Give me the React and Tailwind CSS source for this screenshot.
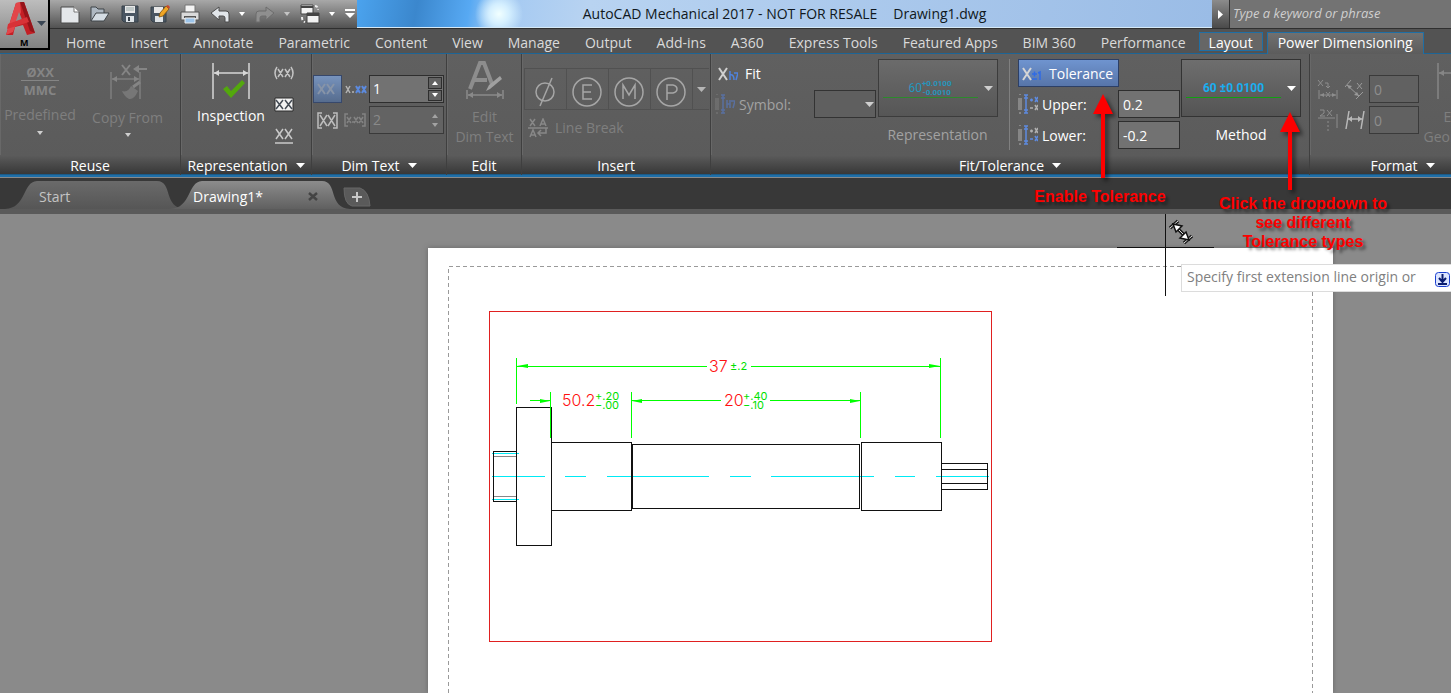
import React, { useState } from 'react';

const MENU = [
  'Home', 'Insert', 'Annotate', 'Parametric', 'Content', 'View', 'Manage', 'Output',
  'Add-ins', 'A360', 'Express Tools', 'Featured Apps', 'BIM 360', 'Performance',
];

const FIELD = 'h-7 border border-[#2e2e2e] bg-[#727272] px-1 text-sm text-white outline-none';
const FIELD_OFF = 'h-7 border border-[#3a3a3a] bg-[#616161] px-1 text-sm text-[#8e8e8e] outline-none';

function Triangle({ className = 'fill-white' }) {
  return (
    <svg className={`h-[5px] w-[9px] shrink-0 ${className}`} viewBox="0 0 9 5">
      <path d="M0 0h9L4.500 5z" />
    </svg>
  );
}

function SmallTriangle({ className = 'fill-white', up = false }) {
  return (
    <svg className={`h-[4px] w-[6px] shrink-0 ${className}`} viewBox="0 0 6 4">
      <path d={up ? 'M0 4h6L3 0z' : 'M0 0h6L3 4z'} />
    </svg>
  );
}

function QuickAccess() {
  return (
    <div className="flex h-full w-[307px] shrink-0 items-center gap-[10px] bg-linear-to-b from-[#a8a8a8] via-[#7d7d7d] to-[#525252] pl-[10px]">
      <button aria-label="New">
        <svg className="h-5 w-5" viewBox="0 0 20 20">
          <path d="M1 3h13l5 5v11H1z" fill="#e4e7ea" stroke="#4b4b4b" />
          <path d="M14 3v5h5" fill="#fff" stroke="#777" />
        </svg>
      </button>
      <button aria-label="Open">
        <svg className="h-5 w-5" viewBox="0 0 20 20">
          <path d="M1 17V3h5l2 2h6v4" fill="#aeb8c2" stroke="#3f4448" />
          <path d="M1 17 6 9h13l-5 8z" fill="#d4dce3" stroke="#3f4448" />
        </svg>
      </button>
      <button aria-label="Save">
        <svg className="h-5 w-5" viewBox="0 0 20 20">
          <path d="M2 2h16v16H4l-2-2z" fill="#4a5663" stroke="#39424b" />
          <path d="M5 2h10v7H5z" fill="#e8e8e8" />
          <path d="M6 4h8M6 6h8" stroke="#9aa" />
          <path d="M6 12h8v6H6z" fill="#dfe4e8" />
          <path d="M8 13h2v4H8z" fill="#39424b" />
        </svg>
      </button>
      <button aria-label="Save As">
        <svg className="h-5 w-5" viewBox="0 0 20 20">
          <path d="M1 3h15v15H3l-2-2z" fill="#4a5663" stroke="#39424b" />
          <path d="M4 3h9v6H4z" fill="#e8e8e8" />
          <path d="M5 12h8v6H5z" fill="#dfe4e8" />
          <path d="m9 13 1-4 6-7 3 3-6 7z" fill="#f0a626" stroke="#7a5211" strokeWidth="0.8" />
          <path d="m16 2 3 3 1-2-2-2z" fill="#c9482b" />
        </svg>
      </button>
      <button aria-label="Plot">
        <svg className="h-5 w-5" viewBox="0 0 20 20">
          <path d="M5 1h10v8H5z" fill="#f4f4f4" stroke="#777" />
          <path d="M1 8h18v8H1z" fill="#dadada" stroke="#555" />
          <path d="M4 12h12v2H4z" fill="#555" />
          <path d="M5 14h10v5H5z" fill="#9cc4ea" stroke="#eee" />
        </svg>
      </button>
      <button aria-label="Undo">
        <svg className="h-5 w-5" viewBox="0 0 20 20">
          <path d="m1 9 8-6v4h7q3 0 3 3v8h-4v-4q0-2-2-2H9v4z" fill="#e2e6ea" stroke="#4c4c4c" />
        </svg>
      </button>
      <button aria-label="Undo list" className="-ml-px"><SmallTriangle /></button>
      <button aria-label="Redo">
        <svg className="h-5 w-5" viewBox="0 0 20 20">
          <path d="m19 9-8-6v4H4q-3 0-3 3v8h4v-4q0-2 2-2h4v4z" fill="#8f8f8f" stroke="#6d6d6d" />
        </svg>
      </button>
      <button aria-label="Redo list" className="-ml-px"><SmallTriangle className="fill-[#c4c4c4]" /></button>
      <button aria-label="Switch windows">
        <svg className="h-5 w-5" viewBox="0 0 20 20">
          <path d="M1 1h12v9H1z" fill="#f2f2f2" stroke="#444" />
          <path d="M1 2h12v2H1z" fill="#444" />
          <path d="M7 9h12v10H7z" fill="#f2f2f2" stroke="#444" />
          <path d="M7 9h12v3H7z" fill="#444" />
          <path d="M15 2q3 0 3 4M2 13q0 4 3 5" fill="none" stroke="#eee" strokeWidth="2" strokeDasharray="3 2" />
        </svg>
      </button>
      <button aria-label="Window list" className="-ml-px"><SmallTriangle /></button>
      <button aria-label="Customize toolbar">
        <svg className="h-[10px] w-[10px]" viewBox="0 0 10 10">
          <path d="M0 0h10v2H0zM0 4h10L5 9z" fill="#fff" />
        </svg>
      </button>
    </div>
  );
}

function Header() {
  return (
    <header className="flex border-b border-[#1d6596] bg-[#535353]">
      <button aria-label="Application menu" className="h-[50px] w-[50px] shrink-0 border-r-2 border-b-2 border-black bg-linear-to-b from-[#bdbdbd] to-[#828282]">
        <svg className="h-12 w-12" viewBox="0 0 48 48">
          <path d="m16 3 8-1 11 31-8 2-4-10-8 2-2 8H6z" fill="#c41f25" />
          <path d="m16 3 4-1 1 10-8 20-7 3z" fill="#e2464a" />
          <path d="m19 12-4 12 8-2z" fill="#8f8f8f" />
          <path d="m20 2 4 0 11 31-5-2z" fill="#95141a" />
          <path d="m8 24 19-7 2 5-22 7z" fill="#d83237" />
          <path d="M37 21h9l-4.500 5z" fill="#3a4654" />
          <text x="20" y="46" fontSize="9" fontWeight="bold" fill="#000">M</text>
        </svg>
      </button>
      <div className="min-w-0 flex-1">
        <div className="flex h-[29px] border-b border-[#2f2f2f]">
          <QuickAccess />
          <div className="flex min-w-0 flex-1 items-center justify-center gap-4 border-b border-[#d5e9f7] bg-[radial-gradient(circle_at_142px_14px,#f1ffff_0px,#d4efff_10px,transparent_24px),linear-gradient(100deg,#4ba3ee_0px,#3b87cd_60px,#57a9f3_112px,#a3c9f2_140px,#b8d3f1_230px,#9abce6_100%)] pt-px text-sm text-[#101820]">
            <h1 className="whitespace-nowrap">AutoCAD Mechanical 2017 - NOT FOR RESALE</h1>
            <span className="whitespace-nowrap">Drawing1.dwg</span>
          </div>
          <button aria-label="Expand search" className="flex w-[17px] shrink-0 items-center justify-center bg-linear-to-b from-[#8c8c8c] to-[#4a4a4a]">
            <svg className="h-[9px] w-[5px] fill-white" viewBox="0 0 5 9"><path d="M0 0v9l5-4.500z" /></svg>
          </button>
          <input
            type="text"
            aria-label="Search"
            placeholder="Type a keyword or phrase"
            className="w-[222px] shrink-0 border-l border-[#333] bg-[#737373] px-[3px] text-[13px] italic outline-none placeholder:text-[#cfcfcf]"
          />
        </div>
        <nav className="flex h-6 items-end gap-px pl-1 text-sm text-[#dadada]">
          {MENU.map((name) => (
            <a key={name} href="#" className="h-[21px] px-3 leading-[22px] whitespace-nowrap">{name}</a>
          ))}
          <a href="#" className="mb-[2px] h-[19px] border border-[#1f6fa5] bg-[#666] px-[9px] leading-[19px] text-white">Layout</a>
          <a href="#" className="z-10 -mb-px ml-[3px] h-[22px] border border-b-0 border-[#1f6fa5] bg-linear-to-b from-[#707070] to-[#5c5c5c] px-[10px] leading-5 whitespace-nowrap text-white">
            Power Dimensioning
          </a>
        </nav>
      </div>
    </header>
  );
}

function Panel({ title, width, menu = false, children }) {
  return (
    <section className={`flex shrink-0 flex-col border-r border-[#3f3f3f] ${width}`}>
      <div className="h-[101px] border-l border-[#686868]">{children}</div>
      <h2 className="flex h-5 items-center justify-center gap-2 border-b border-[#1b5a87] bg-linear-to-b from-[#5c5c5c] to-[#383838] pt-[2px] text-sm leading-4 whitespace-nowrap text-white">
        {title}
        {menu && <Triangle />}
      </h2>
    </section>
  );
}

// two extension lines with a double headed arrow between them
function DimLines({ color }) {
  return (
    <g stroke={color} fill={color}>
      <path d="M2 0v36M38 0v36M3 10h34" strokeWidth="1.500" fill="none" />
      <path d="m3 10 5-3v6zM37 10l-5-3v6z" stroke="none" />
    </g>
  );
}

function ReusePanel() {
  return (
    <Panel title="Reuse" width="w-[181px]">
      <div className="flex pt-[9px] text-sm text-[#7f7f7f]">
        <button className="flex w-[78px] flex-col items-center whitespace-nowrap" disabled>
          <svg className="h-9 w-10" viewBox="0 0 40 36">
            <g fill="#858585" fontSize="13" fontWeight="bold" textAnchor="middle">
              <text x="20" y="14">ØXX</text>
              <text x="20" y="32">MMC</text>
            </g>
            <path d="M1 17.500h38" stroke="#858585" />
          </svg>
          <span className="h-8 pt-[7px] leading-[18px]">Predefined</span>
          <SmallTriangle className="fill-[#cfcfcf]" />
        </button>
        <button className="flex w-[97px] flex-col items-center whitespace-nowrap" disabled>
          <svg className="h-[38px] w-10" viewBox="0 0 40 38">
            <path d="M3 9v27M32 9v27M4 16h27" stroke="#7f7f7f" strokeWidth="1.500" />
            <path d="m4 16 5-3v6zM31 16l-5-3v6z" fill="#858585" />
            <path d="m14 2 8 10M22 2l-8 10" stroke="#858585" strokeWidth="2" />
            <path d="M39 6H30" stroke="#858585" strokeWidth="2" />
            <path d="m25 6 6-4v8z" fill="#858585" />
            <path d="M14 28q6 2 9-5l7 5q-4 9-9 8-5-3-7-8z" fill="#777" />
            <path d="m25 24 7-5" stroke="#858585" strokeWidth="3" />
          </svg>
          <span className="h-8 pt-2 leading-[18px]">Copy From</span>
          <SmallTriangle className="fill-[#cfcfcf]" />
        </button>
      </div>
    </Panel>
  );
}

function RepresentationPanel() {
  return (
    <Panel title="Representation" width="w-[131px]" menu>
      <div className="flex pt-[9px] pl-[10px] text-sm text-white">
        <button className="flex w-[78px] flex-col items-center">
          <svg className="h-9 w-10" viewBox="0 0 40 36">
            <DimLines color="#d6d6d6" />
            <path d="m12 26 4-3 4 5L31 17l3 3-14 15z" fill="#53a80d" />
          </svg>
          <span className="h-8 pt-2 leading-[18px]">Inspection</span>
        </button>
        <div className="flex flex-col gap-3 pl-[2px]">
          <button aria-label="Reference dimension">
            <svg className="h-5 w-6" viewBox="0 0 24 20">
              <path d="M5 4q-4 6 0 12M19 4q4 6 0 12M6 6l5 8M11 6l-5 8M13 6l5 8M18 6l-5 8" fill="none" stroke="#c4c4c4" strokeWidth="1.500" />
            </svg>
          </button>
          <button aria-label="Theoretical dimension">
            <svg className="h-5 w-6" viewBox="0 0 24 20">
              <path d="M3 3h18v13H3z" fill="#f2f2f2" stroke="#2d2d2d" />
              <path d="m4 5 7 9M11 5l-7 9M13 5l7 9M20 5l-7 9" stroke="#444c55" strokeWidth="1.500" />
            </svg>
          </button>
          <button aria-label="Underlined dimension">
            <svg className="h-5 w-6" viewBox="0 0 24 20">
              <path d="m4 2 7 10M11 2 4 12M13 2l7 10M20 2l-7 10M3 16h18" stroke="#c9c9c9" strokeWidth="1.500" />
            </svg>
          </button>
        </div>
      </div>
    </Panel>
  );
}

function DimTextPanel() {
  const [primary, setPrimary] = useState('1');
  return (
    <Panel title="Dim Text" width="w-[135px]" menu>
      <div className="grid grid-cols-[29px_25px_75px] gap-x-px gap-y-[3px] pt-[21px]">
        <button aria-label="Primary units" className="h-7 border border-[#37486b] bg-linear-to-b from-[#7793bd] to-[#566c8e]">
          <svg className="h-5 w-6" viewBox="0 0 24 20">
            <path d="m4 5 7 10M11 5 4 15M13 5l7 10M20 5l-7 10" stroke="#8794a8" strokeWidth="2" />
          </svg>
        </button>
        <svg className="h-7 w-[25px]" viewBox="0 0 25 28">
          <path d="m3 11 4 7M7 11l-4 7M9 17h2" stroke="#b5b5b5" strokeWidth="1.500" />
          <path d="m13 11 4 7M17 11l-4 7M19 11l4 7M23 11l-4 7" stroke="#5c8ade" strokeWidth="2" />
        </svg>
        <div className="flex border border-[#2e2e2e] bg-[#727272]">
          <input
            type="text"
            aria-label="Primary precision"
            value={primary}
            onChange={(e) => setPrimary(e.target.value)}
            className="w-[58px] bg-transparent px-[3px] text-sm text-white outline-none"
          />
          <span className="flex w-[14px] shrink-0 flex-col gap-px py-px">
            <button aria-label="Increase" className="flex flex-1 items-center justify-center border border-[#2e2e2e] bg-[#626262]"><SmallTriangle up /></button>
            <button aria-label="Decrease" className="flex flex-1 items-center justify-center border border-[#2e2e2e] bg-[#626262]"><SmallTriangle /></button>
          </span>
        </div>
        <svg className="h-7 w-[29px]" viewBox="0 0 29 28">
          <path d="M9 7H5v15h4M20 7h4v15h-4M7 9l7 11M14 9 7 20M15 9l7 11M22 9l-7 11" fill="none" stroke="#bdbdbd" strokeWidth="1.500" />
        </svg>
        <svg className="h-7 w-[25px]" viewBox="0 0 25 28">
          <path d="M5 8H2v12h3M19 8h3v12h-3M4 11l4 6M8 11l-4 6M9 16h2M11 11l4 6M15 11l-4 6M16 11l4 6M20 11l-4 6" fill="none" stroke="#838383" strokeWidth="1.500" />
        </svg>
        <div className="flex border border-[#3a3a3a] bg-[#636363]">
          <input type="text" aria-label="Alternate precision" defaultValue="2" disabled className="w-[58px] bg-transparent px-[3px] text-sm text-[#8a8a8a]" />
          <span className="flex w-[14px] shrink-0 flex-col items-center justify-around py-1">
            <SmallTriangle className="fill-[#a3a3a3]" up />
            <SmallTriangle className="fill-[#a3a3a3]" />
          </span>
        </div>
      </div>
    </Panel>
  );
}

function EditPanel() {
  return (
    <Panel title="Edit" width="w-[75px]">
      <button className="flex w-full flex-col items-center pt-[7px] text-sm leading-5 whitespace-nowrap text-[#7f7f7f]" disabled>
        <svg className="h-[39px] w-10" viewBox="0 0 40 39">
          <path d="M5 28 15 2h4l8 21M9 19h13" fill="none" stroke="#8d8d8d" strokeWidth="4" />
          <path d="m21 30 3-6L35 15l2 3-12 10z" fill="#a0a0a0" />
          <path d="M2 29v9M38 29v9M3 34h34" stroke="#8a8a8a" strokeWidth="1.500" />
          <path d="m3 34 5-3v6zM37 34l-5-3v6z" fill="#8a8a8a" />
        </svg>
        <span className="pt-[7px]">Edit</span>
        <span>Dim Text</span>
      </button>
    </Panel>
  );
}

function InsertPanel() {
  return (
    <Panel title="Insert" width="w-[189px]">
      <div className="px-px pt-[14px]">
        <div className="flex h-[42px] border border-r-0 border-[#515151]">
          <button aria-label="Diameter" className="w-[42px] border-r border-[#515151]" disabled>
            <svg className="h-[38px] w-[38px]" viewBox="0 0 38 38">
              <circle cx="20" cy="22" r="9" fill="none" stroke="#a6a6a6" strokeWidth="1.500" />
              <path d="m27 8-12 28" stroke="#a6a6a6" strokeWidth="1.500" />
            </svg>
          </button>
          <button aria-label="Envelope" className="w-[42px] border-r border-[#515151]" disabled>
            <svg className="h-[38px] w-[38px]" viewBox="0 0 38 38">
              <circle cx="20" cy="22" r="14" fill="none" stroke="#a6a6a6" strokeWidth="1.500" />
              <path d="M25 15h-9v14h9M16 22h8" fill="none" stroke="#a6a6a6" strokeWidth="1.500" />
            </svg>
          </button>
          <button aria-label="Maximum material" className="w-[42px] border-r border-[#515151]" disabled>
            <svg className="h-[38px] w-[38px]" viewBox="0 0 38 38">
              <circle cx="20" cy="22" r="14" fill="none" stroke="#a6a6a6" strokeWidth="1.500" />
              <path d="M14 29V15l6 10 6-10v14" fill="none" stroke="#a6a6a6" strokeWidth="1.500" />
            </svg>
          </button>
          <button aria-label="Projected zone" className="w-[42px] border-r border-[#515151]" disabled>
            <svg className="h-[38px] w-[38px]" viewBox="0 0 38 38">
              <circle cx="20" cy="22" r="14" fill="none" stroke="#a6a6a6" strokeWidth="1.500" />
              <path d="M16 30V15h6q4 1 4 4t-4 4h-6" fill="none" stroke="#a6a6a6" strokeWidth="1.500" />
            </svg>
          </button>
          <button aria-label="More symbols" className="flex w-4 items-center justify-center" disabled>
            <Triangle className="fill-[#b5b5b5]" />
          </button>
        </div>
        <button className="flex h-9 items-center gap-[7px] pl-1 text-sm text-[#7f7f7f]" disabled>
          <svg className="h-5 w-5" viewBox="0 0 20 20">
            <path d="m2 1 5 7M7 1 2 8M12 8l3-7 3 7M13 6h4M2 19l3-7 3 7M3 17h4M0 10h20M18 10v5h-7M13 12l-3 3 3 3" fill="none" stroke="#888" strokeWidth="1.500" />
          </svg>
          Line Break
        </button>
      </div>
    </Panel>
  );
}

function DeviationIcon({ upper }) {
  return (
    <svg className="h-5 w-5 shrink-0" viewBox="0 0 20 20">
      <path d="M1 0h2M1 19h2M1 4v12M3 4v12" stroke="#b0b0b0" />
      <path d="M8 1v18M6 1h4M6 19h4M6 4h4M6 16h4" stroke="#5e8be0" strokeWidth="1.500" />
      <path d="M12 6h3M13.500 4.500v3M17 3l3 5M20 3l-3 5" stroke={upper ? '#5e8be0' : '#b0b0b0'} strokeWidth="1.500" />
      <path d="M12 14h3M17 11l3 5M20 11l-3 5" stroke={upper ? '#b0b0b0' : '#5e8be0'} strokeWidth="1.500" />
    </svg>
  );
}

function FitTolerancePanel() {
  const [upper, setUpper] = useState('0.2');
  const [lower, setLower] = useState('-0.2');
  return (
    <Panel title="Fit/Tolerance" width="w-[599px]" menu>
      <div className="flex pt-[5px] text-sm">
        <div className="grid w-[165px] grid-rows-[28px_28px] gap-y-[3px]">
          <button className="flex items-center gap-[7px] pt-px pl-[6px] text-white">
            <svg className="h-5 w-5" viewBox="0 0 20 20">
              <path d="m1 4 8 12M9 4 1 16" stroke="#d0d0d0" strokeWidth="2" />
              <path d="M12 7v9M12 11q4-1 4 5M16 9h4l-2 7" fill="none" stroke="#4f83dd" strokeWidth="1.500" />
            </svg>
            Fit
          </button>
          <div className="flex items-center pl-[3px] text-[#a2a2a2]">
            <svg className="h-5 w-5 shrink-0" viewBox="0 0 20 20">
              <path d="M1 0h2M1 19h2M1 4v12M3 4v12" stroke="#7c7c7c" />
              <path d="M8 1v18M6 1h4M6 19h4M6 4h4M6 16h4M12 6v8M15 6v8M12 10h3M16 7h4l-2 7" stroke="#5970a0" fill="none" strokeWidth="1.500" />
            </svg>
            <label htmlFor="symbol" className="w-[79px] pt-px pl-1">Symbol:</label>
            <div className="relative">
              <select id="symbol" disabled className="h-7 w-[62px] appearance-none border border-[#333] bg-[#5f5f5f]">
                <option></option>
              </select>
              <svg className="pointer-events-none absolute top-3 right-[2px] h-[5px] w-[9px] fill-[#cfcfcf]" viewBox="0 0 9 5">
                <path d="M0 0h9L4.500 5z" />
              </svg>
            </div>
          </div>
        </div>
        <div className="flex w-[121px] flex-col items-center">
          <button aria-label="Fit representation" disabled className="flex h-[58px] w-[120px] items-center gap-[6px] border border-[#3c3c3c] bg-linear-to-b from-[#6b6b6b] to-[#565656] px-1">
            <span className="flex h-5 w-24 items-center justify-center border-b border-[#2c8a2c] font-[Roboto,sans-serif] text-xs text-[#2596be]">
              60
              <span className="text-[8px] leading-[9px] font-bold">+0.0100<br />-0.0010</span>
            </span>
            <Triangle className="fill-[#cfcfcf]" />
          </button>
          <span className="pt-2 text-[#a2a2a2]">Representation</span>
        </div>
        <div className="ml-[11px] h-[91px] w-[9px] border-l border-[#808080]" />
        <div className="grid w-[162px] grid-rows-[28px_28px_28px] gap-y-[3px] text-white">
          <button className="flex w-[101px] items-center gap-[7px] border border-[#2c3f66] bg-linear-to-b from-[#6f94cf] to-[#5775a9] pt-px pl-[3px]">
            <svg className="h-5 w-5" viewBox="0 0 20 20">
              <path d="m1 4 8 12M9 4 1 16" stroke="#d5d5d5" strokeWidth="2" />
              <path d="M10 10h5M12.500 7.500v5M10 15h5M16 9l2-1v8" fill="none" stroke="#2f6be6" strokeWidth="1.500" />
            </svg>
            Tolerance
          </button>
          <div className="flex items-center">
            <DeviationIcon upper />
            <label htmlFor="upper" className="w-20 pt-px pl-1">Upper:</label>
            <input id="upper" type="text" value={upper} onChange={(e) => setUpper(e.target.value)} className={`w-[62px] ${FIELD}`} />
          </div>
          <div className="flex items-center">
            <DeviationIcon />
            <label htmlFor="lower" className="w-20 pt-px pl-1">Lower:</label>
            <input id="lower" type="text" value={lower} onChange={(e) => setLower(e.target.value)} className={`w-[62px] ${FIELD}`} />
          </div>
        </div>
        <div className="flex w-[122px] flex-col items-center">
          <button aria-label="Tolerance method" className="flex h-[58px] w-[120px] items-center gap-[6px] border border-[#333] bg-linear-to-b from-[#6e6e6e] to-[#545454] px-1">
            <span className="flex h-5 w-24 items-center justify-center border-b border-[#12a012] font-[Roboto,sans-serif] text-xs font-bold text-[#19aef0]">
              60 ±0.0100
            </span>
            <Triangle />
          </button>
          <span className="pt-2 text-white">Method</span>
        </div>
      </div>
    </Panel>
  );
}

function FormatPanel() {
  return (
    <Panel title="Format" width="w-[186px]" menu>
      <div className="flex gap-[2px] pt-[5px] pl-[6px] text-sm text-[#7f7f7f]">
        <div className="grid grid-cols-[28px_24px_51px] content-start items-center gap-y-[3px] pt-4">
          <svg className="h-6 w-6" viewBox="0 0 24 24">
            <path d="m1 3 5 6M6 3 1 9M8 6h3v4M9 9l2 2 2-2M2 13v9M20 13v9M3 18h16M9 15l4 5M13 15l-4 5" fill="none" stroke="#8d8d8d" />
            <path d="m3 18 4-2v4zM19 18l-4-2v4z" fill="#8d8d8d" />
          </svg>
          <svg className="h-5 w-5" viewBox="0 0 20 20">
            <path d="m2 6 12 11M0 8l6-7M11 20l7-7M12 4l5 6M17 4l-5 6" fill="none" stroke="#9a9a9a" />
            <path d="m2 6 5 1-3 3zM14 17l-5-1 3-3z" fill="#9a9a9a" />
          </svg>
          <input type="text" aria-label="Text angle" defaultValue="0" disabled className={`w-[50px] ${FIELD_OFF}`} />
          <svg className="h-6 w-6" viewBox="0 0 24 24">
            <path d="M3 2h4v3l-4 3h5M10 2l5 6M15 2l-5 6M1 10h17M20 6v14M11 13v2M11 17v2M11 21v2" fill="none" stroke="#8d8d8d" />
          </svg>
          <svg className="h-5 w-5" viewBox="0 0 20 20">
            <path d="M4 1 1 19M19 1l-3 18M3 9h14" fill="none" stroke="#b8b8b8" strokeWidth="1.500" />
            <path d="m3 9 4-3v6zM17 9l-4-3v6z" fill="#b8b8b8" />
          </svg>
          <input type="text" aria-label="Oblique angle" defaultValue="0" disabled className={`w-[50px] ${FIELD_OFF}`} />
        </div>
        <button className="flex w-[68px] flex-col items-center pt-1 leading-5" disabled>
          <svg className="h-9 w-10" viewBox="0 0 40 36"><DimLines color="#868686" /></svg>
          <span className="pt-2">Edit</span>
          <span>Geometry</span>
        </button>
      </div>
    </Panel>
  );
}

function FileTab({ name, active = false, className = '' }) {
  return (
    <div className={`relative flex h-7 w-[180px] shrink-0 items-center pt-[3px] ${className}`}>
      <svg className="absolute inset-0 h-7 w-[180px]" viewBox="0 0 180 28">
        <defs>
          <linearGradient id={`tab-${active}`} x2="0" y2="1">
            <stop offset="0" stopColor={active ? '#8c8c8c' : '#6a6a6a'} />
            <stop offset="1" stopColor={active ? '#606060' : '#565656'} />
          </linearGradient>
        </defs>
        <path d="M0 28C22 27 17 1 32 0H152C168 0 158 27 180 28z" fill={`url(#tab-${active})`} />
      </svg>
      <a href="#" className={`relative w-[110px] text-sm leading-5 ${active ? 'ml-[23px] text-white' : 'ml-[34px] text-[#c4c4c4]'}`}>{name}</a>
      {active && (
        <button aria-label="Close tab" className="relative ml-1">
          <svg className="h-[11px] w-[11px]" viewBox="0 0 11 11">
            <path d="m2 2 8 7M10 2 2 9" stroke="#444" strokeWidth="2.500" />
          </svg>
        </button>
      )}
    </div>
  );
}

function FileTabs() {
  return (
    <div className="flex h-9 items-end border-b-[5px] border-[#5a5a5a] bg-[#383838] pl-[5px]">
      <FileTab name="Start" />
      <FileTab name="Drawing1*" active className="-ml-[15px]" />
      <button aria-label="New tab" className="-ml-[7px] h-6 w-7">
        <svg className="h-5 w-7" viewBox="0 0 28 20">
          <path d="M1 1h16q9 3 10 18H9Q1 17 1 1z" fill="#5a5a5a" stroke="#666" />
          <path d="M14 5v10M9 10h10" stroke="#c8c8c8" strokeWidth="2" />
        </svg>
      </button>
    </div>
  );
}

function ShaftDrawing() {
  return (
    <svg className="h-[445px] w-[905px]" viewBox="428 248 905 445" shapeRendering="crispEdges">
      <path d="M448.500 693V266.500H1312.500V693" fill="none" stroke="#9a9a9a" strokeDasharray="4 3" />
      <path d="M489.500 311.500h502v330h-502z" fill="none" stroke="#e02020" />
      <g stroke="#00eaf5">
        <path d="M492 476.500h53M565 476.500h21M607 476.500h102M730 476.500h21M771 476.500h103M895 476.500h20M936 476.500h53" />
        <path d="M492 453.500h27M492 499.500h27" />
      </g>
      <g stroke="#888"><path d="M494 456.500h22M494 496.500h22" /></g>
      <g fill="none" stroke="#111">
        <path d="M493.500 451.500h23v50h-23z" />
        <path d="M516.500 407.500h35v138h-35z" />
        <path d="M551.500 442.500h80v68h-80z" />
        <path d="M632.500 444.500h227v64h-227z" />
        <path d="M861.500 442.500h80v68h-80z" />
        <path d="M941.500 463.500h46v26h-46zM941.500 469.500h46M941.500 483.500h46" />
      </g>
      <g stroke="#00ff00" fill="none">
        <path d="M516.500 358v46M940.500 358v80M550.500 392v46M631.500 392v46M860.500 392v46" />
        <path d="M517 366.500h190M751 366.500h189M530 400.500h20M632 400.500h89M770 400.500h90" />
      </g>
      <path
        d="m517 366 11-2v4zM940 366l-11-2v4zM550 401l-10-2v4zM632 401l10-2v4zM860 401l-10-2v4z"
        fill="#00ff00"
        shapeRendering="auto"
      />
      <g fontFamily="Inter, sans-serif" fontWeight="300" fontSize="16" fill="#ff1010">
        <text x="709" y="372">37</text>
        <text x="562" y="406">50.2</text>
        <text x="724" y="406">20</text>
      </g>
      <g fontFamily="Inter, sans-serif" fontSize="11" fill="#00e000">
        <text x="730" y="370">±.2</text>
        <text x="595" y="400">+.20</text>
        <text x="595" y="409">−.00</text>
        <text x="743" y="400">+.40</text>
        <text x="743" y="409">−.10</text>
      </g>
    </svg>
  );
}

function Canvas() {
  return (
    <main className="relative flex-1 overflow-hidden bg-[#8a8a8a]">
      <div className="absolute top-[34px] bottom-0 left-[428px] bg-white shadow-[0_0_5px_#666]">
        <ShaftDrawing />
      </div>
      {/* crosshair with the dimension cursor badge */}
      <svg className="absolute top-0 left-[1117px] h-[82px] w-[98px]" viewBox="0 0 98 82">
        <path d="M48.500 0v82M0 33.500h97" stroke="#111" shapeRendering="crispEdges" />
        <path d="m53 14 8-7M67 29l8-7M59 13l9 9" stroke="#1a1a1a" strokeWidth="3.500" />
        <path d="m53 14 8-7M67 29l8-7M59 13l9 9" stroke="#ddd" strokeWidth="1" />
        <path d="m56 10 9 2-6 6zM72 26l-9-2 6-6z" fill="#fff" stroke="#111" strokeWidth="1.500" />
      </svg>
      <div className="absolute top-[50px] right-0 left-[1181px] flex h-7 items-center justify-between border border-r-0 border-[#dcdcdc] bg-white pr-px pb-[2px] pl-[5px] text-sm whitespace-nowrap text-[#808080]">
        Specify first extension line origin or
        <svg className="mt-[5px] h-[15px] w-[15px] shrink-0" viewBox="0 0 15 15">
          <rect x="0.500" y="0.500" width="14" height="14" rx="3" fill="#dde6ff" stroke="#1a3fd0" />
          <path d="M7.500 2v7M4 6l3.500 4L11 6M3 12h9" fill="none" stroke="#0b1d70" strokeWidth="2" />
        </svg>
      </div>
    </main>
  );
}

function Callouts() {
  return (
    <div className="pointer-events-none font-['Liberation_Sans',Arial,sans-serif] text-base leading-[19px] font-bold text-[#fe0000]">
      <svg className="absolute top-[93px] left-[1092px] h-[90px] w-6 drop-shadow-[3px_3px_2px_#0008]" viewBox="0 0 24 90">
        <path d="M11 1 21 21h-8v64H9V21H1z" fill="#fe0000" />
      </svg>
      <svg className="absolute top-[111px] left-[1279px] h-[90px] w-6 drop-shadow-[3px_3px_2px_#0008]" viewBox="0 0 24 90">
        <path d="M11 1 21 21h-8v58H9V21H1z" fill="#fe0000" />
      </svg>
      <p className="absolute top-[187px] left-[1020px] w-40 text-center text-shadow-[3px_3px_3px_#0007]">Enable Tolerance</p>
      <p className="absolute top-[194px] left-[1203px] w-[200px] text-center text-shadow-[3px_3px_3px_#0007]">
        Click the dropdown to<br />see different<br />Tolerance types
      </p>
    </div>
  );
}

function App() {
  return (
    <div className="relative flex min-h-screen flex-col overflow-hidden font-['Open_Sans','Noto_Sans',sans-serif]">
      <Header />
      <div className="flex overflow-hidden border-b border-[#8a8a8a] bg-linear-to-b from-[#606060] to-[#5a5a5a]">
        <div className="flex w-full border-b-2 border-[#1f6fa8]">
          <ReusePanel />
          <RepresentationPanel />
          <DimTextPanel />
          <EditPanel />
          <InsertPanel />
          <FitTolerancePanel />
          <FormatPanel />
        </div>
      </div>
      <FileTabs />
      <Canvas />
      <Callouts />
    </div>
  );
}

export default App;
